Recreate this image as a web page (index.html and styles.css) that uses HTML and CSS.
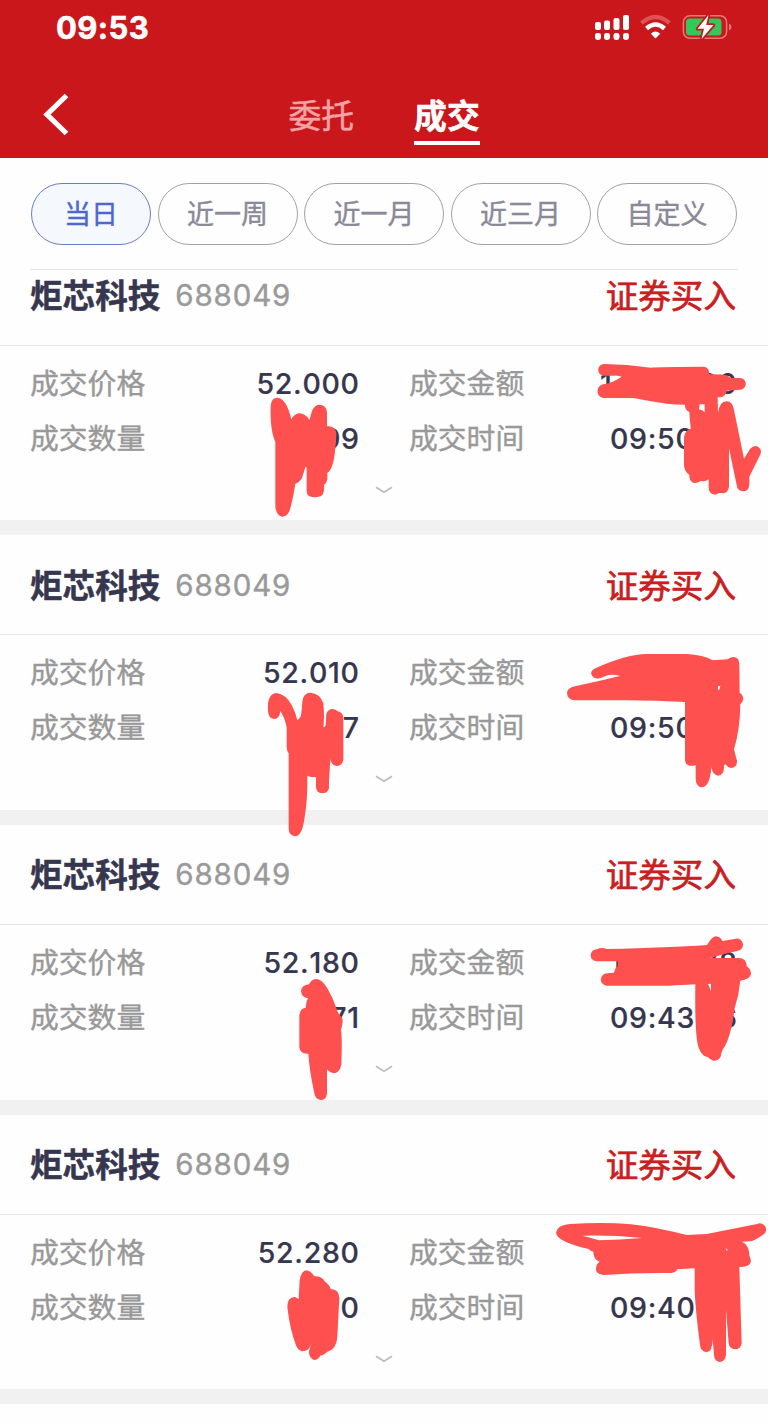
FILE: index.html
```html
<!DOCTYPE html>
<html lang="zh-CN">
<head>
<meta charset="utf-8">
<title>成交</title>
<link rel="stylesheet" href="styles.css">
</head>
<body>
<div class="screen">
  <header class="header">
    <div class="status">
      <span class="clock">09:53</span>
      <svg class="status-icons" width="140" height="30" viewBox="592 12 140 30">
        <g fill="#fff">
          <rect x="595" y="22" width="6" height="8" rx="2"/><rect x="604" y="20.5" width="6" height="9.5" rx="2"/><rect x="613.5" y="18" width="6" height="12" rx="2"/><rect x="623" y="15" width="6" height="15" rx="2"/>
          <rect x="595" y="33" width="6" height="7" rx="2.4"/><rect x="604" y="33" width="6" height="7" rx="2.4"/><rect x="613.5" y="33" width="6" height="7" rx="2.4"/><rect x="623" y="33" width="6" height="7" rx="2.4"/>
          <path d="M655.5 38.5L650.8 33.8Q655.5 29 660.2 33.8Z"/>
        </g>
        <path d="M641.5 23Q655.500 11 669.500 23" fill="none" stroke="#dc5257" stroke-width="4.200"/>
        <path d="M646.500 28.500Q655.500 20.500 664.500 28.500" fill="none" stroke="#fff" stroke-width="4.400"/>
        <rect x="683.400" y="15.700" width="43.200" height="22.600" rx="6.500" fill="none" stroke="#e5777a" stroke-width="1.500"/>
        <rect x="686" y="18.500" width="35.500" height="17" rx="3.500" fill="#35c759"/>
        <path d="M729 23.500Q731.500 24.500 731.500 27Q731.500 29.500 729 30.500Z" fill="#e5777a"/>
        <path d="M708.500 15L697.500 28.800H704L701.500 39L713.500 25H706.200Z" fill="#fff" stroke="#c9171c" stroke-width="3.500" stroke-linejoin="round" paint-order="stroke"/>
      </svg>
    </div>
    <nav class="nav">
      <svg class="back" width="28" height="44" viewBox="0 0 28 44"><path d="M24.500 3.500L5 22.500L24.500 41.500" fill="none" stroke="#fff" stroke-width="5.200"/></svg>
      <span class="tab">委托</span>
      <span class="tab tab-active">成交</span>
    </nav>
  </header>
  <div class="filters">
    <span class="pill pill-active">当日</span><span class="pill">近一周</span><span class="pill">近一月</span><span class="pill">近三月</span><span class="pill">自定义</span>
  </div>
  <main class="list">
    <section class="card">
      <div class="card-head"><b class="name">炬芯科技</b><span class="code">688049</span><span class="side">证券买入</span></div>
      <div class="fields">
        <span class="label">成交价格</span><span class="value">52.000</span><span class="label second">成交金额</span><span class="value split wide"><i>1</i><i>00</i></span>
        <span class="label">成交数量</span><span class="value">99</span><span class="label second">成交时间</span><span class="value split"><i>09:50</i></span>
      </div>
      <svg class="more" width="18" height="8" viewBox="0 0 18 8"><path d="M1 1.200L9 6.200L17 1.200"/></svg>
    </section>
    <section class="card">
      <div class="card-head"><b class="name">炬芯科技</b><span class="code">688049</span><span class="side">证券买入</span></div>
      <div class="fields">
        <span class="label">成交价格</span><span class="value">52.010</span><span class="label second">成交金额</span><span class="value"></span>
        <span class="label">成交数量</span><span class="value">7</span><span class="label second">成交时间</span><span class="value split"><i>09:50</i></span>
      </div>
      <svg class="more" width="18" height="8" viewBox="0 0 18 8"><path d="M1 1.200L9 6.200L17 1.200"/></svg>
    </section>
    <section class="card">
      <div class="card-head"><b class="name">炬芯科技</b><span class="code">688049</span><span class="side">证券买入</span></div>
      <div class="fields">
        <span class="label">成交价格</span><span class="value">52.180</span><span class="label second">成交金额</span><span class="value split"><i>1</i><i>78</i></span>
        <span class="label">成交数量</span><span class="value">71</span><span class="label second">成交时间</span><span class="value split"><i>09:43</i><i>6</i></span>
      </div>
      <svg class="more" width="18" height="8" viewBox="0 0 18 8"><path d="M1 1.200L9 6.200L17 1.200"/></svg>
    </section>
    <section class="card">
      <div class="card-head"><b class="name">炬芯科技</b><span class="code">688049</span><span class="side">证券买入</span></div>
      <div class="fields">
        <span class="label">成交价格</span><span class="value">52.280</span><span class="label second">成交金额</span><span class="value"></span>
        <span class="label">成交数量</span><span class="value">0</span><span class="label second">成交时间</span><span class="value split"><i>09:40</i></span>
      </div>
      <svg class="more" width="18" height="8" viewBox="0 0 18 8"><path d="M1 1.200L9 6.200L17 1.200"/></svg>
    </section>
  </main>
  <!-- Marker strokes covering private figures -->
  <svg class="marker" width="768" height="1422" viewBox="0 0 768 1422">
    <path transform="translate(240 350) scale(.33333)" d="M92 175C92 155 98 143 112 143C132 143 146 172 154 208C162 194 172 190 178 190C190 190 200 197 209 210C214 185 220 164 238 164C254 164 261 175 261 190V229C278 226 290 238 289 254C286 300 284 330 274 354Q270 363 262 369V388Q260 400 252 404V420Q250 441 234 440Q226 443 218 441Q201 440 200 425V352H196Q190 372 186 384Q178 398 166 401C160 440 153 470 148 484Q141 500 126 500Q109 497 106 470V276C95 250 91 220 92 175Z"/>
    <path transform="translate(580 350) scale(.33333)" d="M72 42Q140 43 212 53Q240 50 372 50Q388 52 388 73Q425 72 443 77L452 84H480A17 17 0 0 1 480 119L440 122Q438 140 420 142H413L414 190Q418 154 440 154Q458 154 462 180L492 326L510 297Q522 284 534 290Q546 298 542 311L508 380V405Q506 424 489 424Q472 423 470 405L447 295V410Q444 428 430 430L417 429Q408 435 400 433Q386 430 386 412V388Q376 396 362 393Q352 400 342 399Q327 395 328 374Q311 365 312 340V262Q315 240 332 236L328 186Q314 180 315 164Q290 164 260 161Q210 154 160 144H76A20 20 0 0 1 70 103Q95 100 125 80Q110 76 100 77H72A17 17 0 0 1 72 42ZM359 163H374V187Q368 180 357 178Z"/>
    <path transform="translate(240 640) scale(.33333)" d="M84 212V190Q88 160 109 159Q138 163 155 195Q168 220 172 241Q183 232 183 226Q186 205 187 185Q190 158 211 158Q240 160 250 190Q254 230 250 262Q256 262 257 255L259 222Q264 207 278 207Q288 208 293 214Q308 217 310 232V360Q306 378 290 378Q274 376 271 357L267 425V445Q264 460 246 460Q228 458 228 440V411Q220 414 202 407Q203 480 194 530Q187 588 166 589Q146 587 146 565V340Q141 335 140 322V262Q135 235 121 213Q119 237 102 237Q85 235 84 212Z"/>
    <path transform="translate(550 640) scale(.33333)" d="M140 83Q230 43 290 42H410Q460 44 488 61L533 58Q550 45 564 57Q568 62 568 75L569 158Q580 165 580 177Q578 188 571 192Q570 270 552 328Q556 345 561 362Q562 383 543 384Q532 382 526 373Q520 375 522 380Q523 406 504 407Q488 405 484 382Q482 410 475 426Q467 443 453 442Q437 438 437 415V375Q424 380 413 375Q405 370 405 360V186Q300 180 200 181H72Q52 178 51 159Q52 144 75 139Q140 125 210 108Q195 103 175 105L150 115Q130 119 124 103Q121 90 140 83ZM504 139L511 137L509 148L504 150Z"/>
    <path transform="translate(240 940) scale(.33333)" d="M183 153Q184 136 207 133Q215 117 230 117Q246 118 262 145Q280 175 290 207Q296 226 306 232Q311 245 303 270Q307 290 304 375Q298 399 281 400Q266 396 261 388V462Q258 480 242 480Q226 478 223 460Q208 390 205 341Q180 343 178 322V225Q180 206 197 203Q198 185 204 175Q184 172 183 153Z"/>
    <path transform="translate(570 925) scale(.33333)" d="M80 73Q95 66 110 72Q300 68 411 60Q425 36 437 34Q452 35 457 48L498 41A17 17 0 0 1 504 77Q460 86 422 99H508Q530 100 530 124Q543 132 543 148Q538 164 511 167Q507 210 494 250Q484 330 464 365Q455 375 452 395Q445 408 430 407Q418 402 414 397Q395 395 385 365Q374 330 376 178Q330 181 300 182H110A18 18 0 0 1 112 145L132 143Q134 130 143 124V109H80A18 18 0 0 1 80 73ZM414 177L423 176V200Q419 186 414 177Z"/>
    <path transform="translate(240 1220) scale(.33333)" d="M176 237L179 180Q184 152 200 151Q214 154 223 169Q245 168 255 185Q268 193 272 207Q298 208 298 235L292 350Q290 388 262 395Q250 407 242 406Q235 420 222 420Q207 414 207 395L213 372L208 384Q200 394 186 394Q172 390 168 376Q150 330 142 262Q142 230 165 231Z"/>
    <path transform="translate(540 1210) scale(.33333)" d="M48 68Q50 46 90 42Q250 32 350 55Q400 65 440 75L500 72Q560 60 652 42A18 18 0 0 1 668 75Q640 95 628 94L606 95Q628 105 628 137Q638 155 627 165Q615 172 598 171L605 400Q602 418 585 418Q568 416 566 400L558 300V435Q555 456 539 456Q523 453 522 435L518 386Q518 425 500 427Q482 425 480 405Q465 290 464 235V175L412 178Q408 188 395 189Q280 188 190 195Q168 192 168 178Q168 162 179 155Q160 150 160 125Q150 123 146 117Q50 95 48 68ZM128 77Q220 75 306 84Q240 90 177 91ZM557 114L563 119L560 124Z"/>
  </svg>
</div>
</body>
</html>
```
FILE: styles.css
```css
* { box-sizing: border-box; }
body { margin: 0; background: #fefefe; font-family: Inter, "Noto Sans CJK SC", sans-serif; }
.screen { position: relative; height: 1422px; overflow: hidden; }
.header { height: 157.500px; background: #c9171c; color: #fff; }
.status { display: flex; justify-content: space-between; height: 73px; padding: 12px 36px 0 56px; }
.clock { font-size: 31px; line-height: 31px; font-weight: 700; letter-spacing: 0.400px; -webkit-text-stroke: 0.500px #fff; }
.nav { display: flex; height: 72px; padding-left: 42px; align-items: flex-start; }
.back { margin-top: 19px; }
.tab { height: 72px; margin-left: 218.500px; font-size: 32.800px; line-height: 87px; color: #f4a3a4; -webkit-text-stroke: 0.500px; }
.tab-active { margin-left: 60px; color: #fff; font-weight: 700; border-bottom: 4px solid #fff; }
.filters { display: flex; gap: 6.500px; height: 112px; margin: 0 30px; padding: 25px 1px 0; border-bottom: 1px solid #e4e4e4; }
.pill { flex: 0 0 140px; height: 62px; border: 1px solid #a2a2a4; border-radius: 31px; text-align: center; font-size: 27px; line-height: 62px; color: #8a8998; -webkit-text-stroke: 0.400px; }
.pill-active { flex-basis: 120px; color: #4e68cc; background: #f5f9fe; border-color: #6c7dce; }
.list { overflow: hidden; }
.card { display: flex; flex-direction: column; align-items: center; height: 289.700px; border-bottom: 15.700px solid #f1f1f1; }
.card:first-child { margin-top: -24px; }
.card-head { display: flex; align-items: center; align-self: stretch; height: 100px; flex: none; padding: 0 32px 0 30px; border-bottom: 1px solid #e6e6e6; }
.name { margin-top: -3px; font-size: 32.600px; color: #36374f; -webkit-text-stroke: 0.500px; }
.code { margin-left: 15px; font-size: 29.500px; letter-spacing: 0.850px; color: #9a9a9a; -webkit-text-stroke: 0.400px; }
.side { margin: -3px 0 0 auto; font-size: 32.600px; color: #c9201f; -webkit-text-stroke: 0.700px #c9201f; }
.fields { display: grid; grid-template-columns: 150px 179px 201px 1fr; grid-auto-rows: 55px; align-self: stretch; padding: 10px 31px 0 30px; line-height: 55px; }
.label { font-size: 28.800px; color: #999; -webkit-text-stroke: 0.400px; }
.second { padding-left: 50px; }
.value { margin-right: -0.700px; text-align: right; font-size: 28.500px; font-weight: 500; letter-spacing: 0.700px; font-kerning: none; color: #36374f; -webkit-text-stroke: 0.200px; }
.split { display: flex; justify-content: space-between; padding-left: 50px; }
.wide { padding-left: 40px; }
.value i { font-style: normal; }
.more { margin-top: 20px; }
.more path { fill: none; stroke: #bdbdbd; stroke-width: 1.800; }
.marker { position: absolute; left: 0; top: 0; fill: #ff5050; fill-rule: evenodd; }
```
